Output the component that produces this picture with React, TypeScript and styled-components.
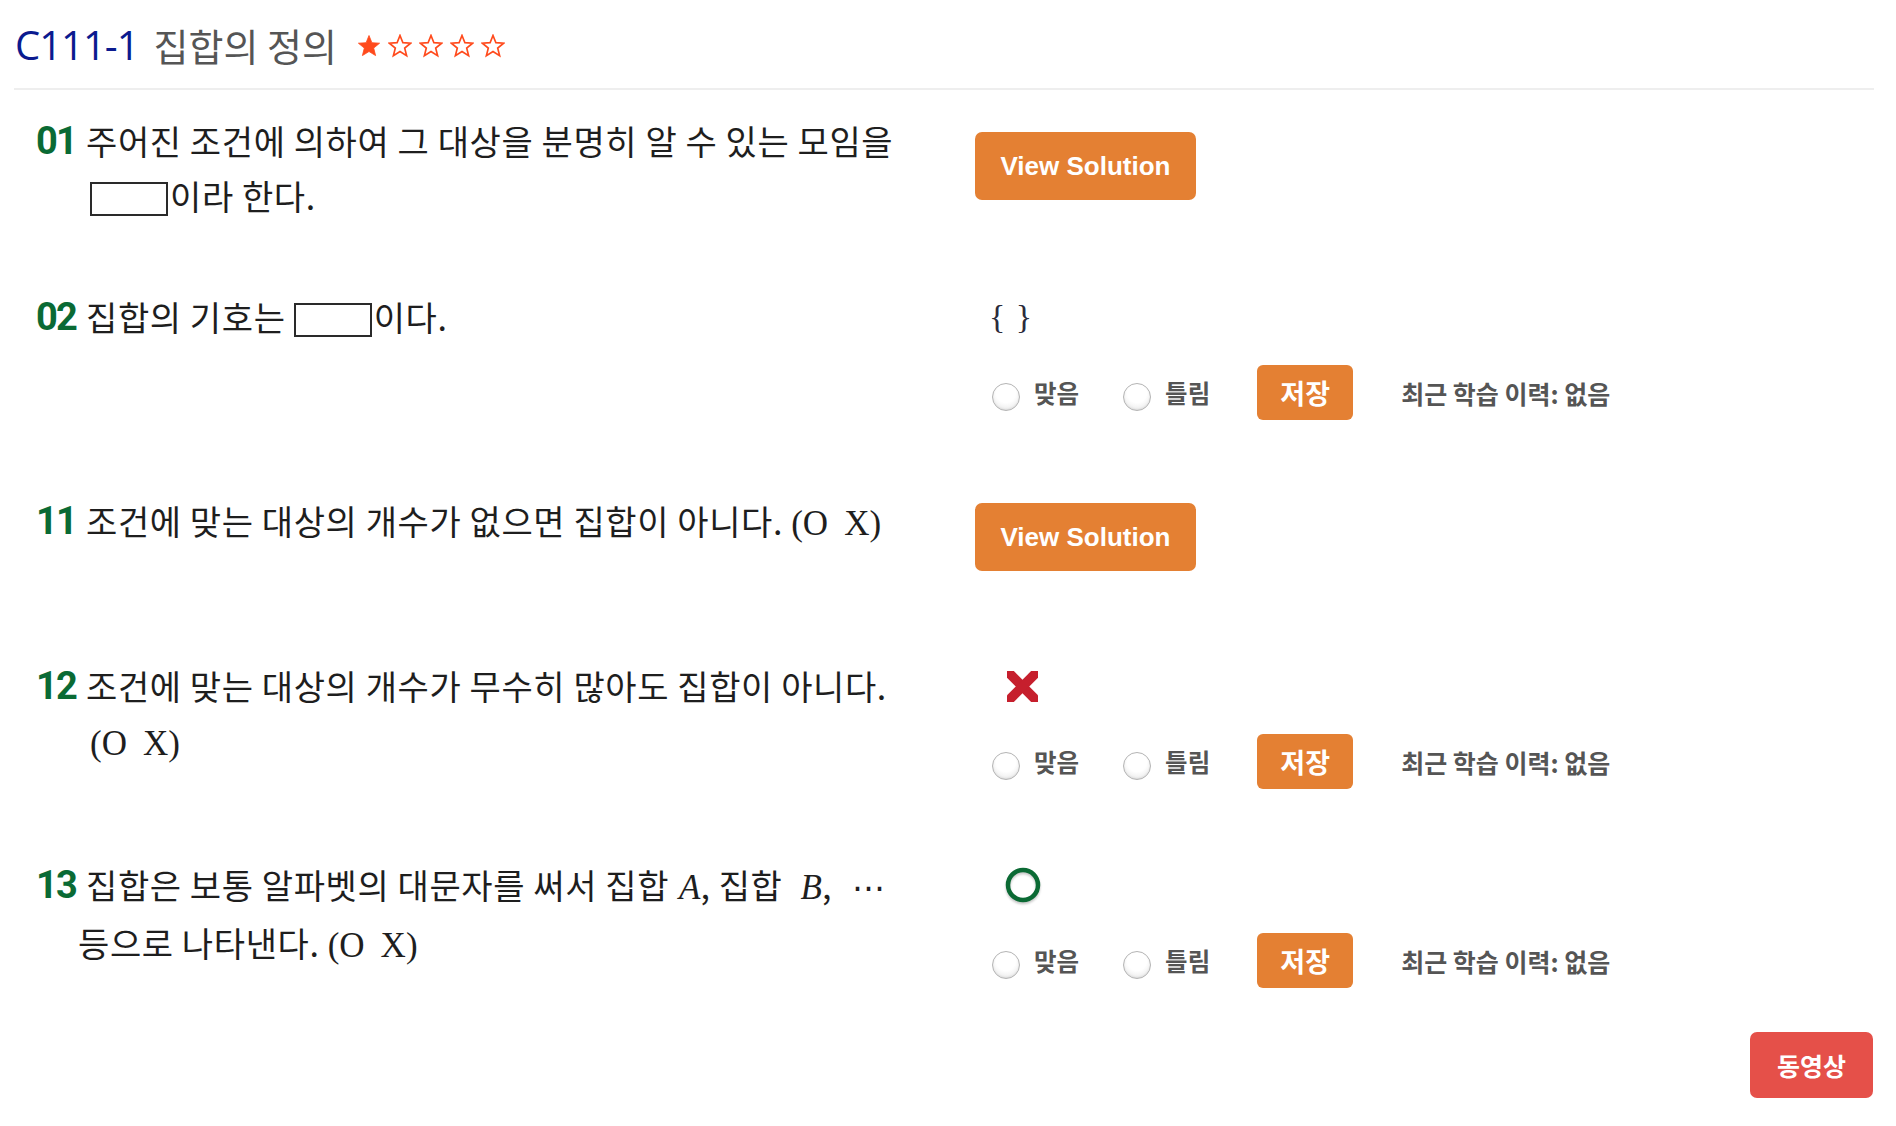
import React from "react";
import styled, { createGlobalStyle } from "styled-components";

const GlobalStyle = createGlobalStyle`
  html, body { margin: 0; padding: 0; background: #fff; }
  body { font-family: "Noto Sans CJK KR", "Noto Sans", sans-serif; color: #222; }
`;

const Page = styled.div`
  width: 1896px;
  min-height: 1126px;
  box-sizing: border-box;
`;

const Header = styled.header`
  display: flex;
  align-items: center;
  height: 88px;
  margin: 0 22px 0 14px;
  border-bottom: 2px solid #eeeeee;
`;

const Code = styled.span`
  font-family: "Open Sans", "Noto Sans", sans-serif;
  font-size: 40px;
  letter-spacing: -1px;
  color: #0b1a8f;
  margin-left: 1px;
`;

const TitleText = styled.span`
  font-family: "Noto Sans CJK KR", sans-serif;
  font-size: 38px;
  letter-spacing: 0;
  color: #555555;
  margin-left: 15px;
`;

const Stars = styled.span`
  display: inline-flex;
  gap: 7px;
  margin-left: 20px;
  margin-top: 4px;
`;

const List = styled.main`
  display: flex;
  flex-direction: column;
`;

const Row = styled.section<{ $top: number }>`
  display: grid;
  grid-template-columns: 975px 1fr;
  align-items: start;
  margin-top: ${(p) => p.$top}px;
`;

const Question = styled.div`
  display: flex;
  align-items: flex-start;
  padding-left: 36px;
  gap: 10px;
`;

const Num = styled.span`
  font-family: Roboto, "Liberation Sans", sans-serif;
  font-weight: 700;
  font-size: 38px;
  letter-spacing: -1.8px;
  line-height: 56px;
  color: #0a6a34;
  flex: none;
`;

const QText = styled.div`
  font-family: "Noto Sans CJK KR", sans-serif;
  font-size: 34px;
  letter-spacing: 0.6px;
  font-weight: 400;
  line-height: 55px;
  color: #1e1e1e;
  white-space: nowrap;
`;

const Line = styled.div<{ $shift?: number }>`
  margin-left: ${(p) => p.$shift ?? 0}px;
`;

const Blank = styled.span`
  display: inline-block;
  width: 74px;
  height: 30px;
  border: 2px solid #2a2a2a;
  vertical-align: -6px;
  margin-right: 2px;
`;

const Serif = styled.span`
  font-family: "Liberation Serif", serif;
  font-size: 35px;
  letter-spacing: 0;
`;

const Italic = styled(Serif)<{ $lead?: number }>`
  font-style: italic;
  margin-left: ${(p) => p.$lead ?? 10}px;
`;

const Dots = styled.span`
  font-family: "DejaVu Sans", sans-serif;
  font-size: 33px;
  margin-left: 20px;
`;

const Gap = styled.span`
  display: inline-block;
  width: 16px;
`;

const Right = styled.div<{ $pad: number }>`
  padding-top: ${(p) => p.$pad}px;
`;

const SolutionButton = styled.button`
  width: 221px;
  height: 68px;
  border: none;
  border-radius: 7px;
  background: #e48033;
  color: #fff;
  font-family: "Liberation Sans", Arial, sans-serif;
  font-weight: 700;
  font-size: 26px;
  cursor: pointer;
`;

const Graded = styled.div`
  padding-left: 14px;
`;

const Answer = styled.div<{ $indent?: number }>`
  height: 56px;
  display: flex;
  align-items: center;
  padding-left: ${(p) => p.$indent ?? 0}px;
`;

const Braces = styled.span`
  font-family: "Liberation Serif", serif;
  font-size: 34px;
  color: #2b2b3a;
  letter-spacing: 1px;
`;

const Controls = styled.div`
  display: flex;
  align-items: center;
  margin: 20px 0 0 3px;
  height: 55px;
`;

const Choice = styled.label`
  display: inline-flex;
  align-items: center;
  gap: 14px;
  margin-right: 44px;
  font-size: 24.5px;
  font-weight: 700;
  color: #555;
  cursor: pointer;
`;

const Radio = styled.input.attrs({ type: "radio" })`
  appearance: none;
  margin: 9px 0 0 0;
  width: 28px;
  height: 28px;
  border-radius: 50%;
  border: 1px solid #b4b4b4;
  background: radial-gradient(circle at 50% 35%, #ffffff 45%, #e2e2e2 100%);
  box-shadow: inset 0 -1px 2px rgba(0, 0, 0, 0.08);
`;

const SaveButton = styled.button`
  width: 96px;
  height: 55px;
  border: none;
  border-radius: 6px;
  background: #e48033;
  color: #fff;
  font-family: "Noto Sans CJK KR", sans-serif;
  font-weight: 700;
  font-size: 27px;
  margin-left: 3px;
  cursor: pointer;
`;

const History = styled.span`
  margin-left: 48px;
  font-size: 25px;
  font-weight: 700;
  color: #555;
`;

const Footer = styled.footer`
  display: flex;
  justify-content: flex-end;
  margin: 44px 23px 0 0;
`;

const VideoButton = styled.button`
  width: 123px;
  height: 66px;
  border: none;
  border-radius: 7px;
  background: #e55049;
  color: #fff;
  font-family: "Noto Sans CJK KR", sans-serif;
  font-weight: 700;
  font-size: 25px;
  cursor: pointer;
`;

const MarkSvg = styled.svg`
  display: block;
`;

const RingSvg = styled.svg`
  display: block;
  filter: drop-shadow(0 2px 1px rgba(0, 0, 0, 0.22));
`;

const Star: React.FC<{ filled?: boolean }> = ({ filled }) => (
  <svg width="24" height="24" viewBox="0 0 24 24">
    <path
      d="M12 1.5l2.9 7.2 7.7.5-5.9 4.9 1.9 7.5L12 17.5l-6.6 4.1 1.9-7.5-5.9-4.9 7.7-.5z"
      fill={filled ? "#ff4a1c" : "#fff"}
      stroke="#ff4a1c"
      strokeWidth={filled ? 0.8 : 1.7}
      strokeLinejoin="miter"
    />
  </svg>
);

const Cross = () => (
  <MarkSvg width="31" height="31" viewBox="0 0 30 30">
    <g fill="#c61f2d">
      <rect x="-10" y="10.3" width="50" height="9.4" transform="rotate(45 15 15)" />
      <rect x="-10" y="10.3" width="50" height="9.4" transform="rotate(-45 15 15)" />
    </g>
  </MarkSvg>
);

const Ring = () => (
  <RingSvg width="36" height="36" viewBox="0 0 36 36">
    <circle cx="18" cy="18" r="15" fill="none" stroke="#0b6a34" strokeWidth="4.5" />
  </RingSvg>
);

const Grading: React.FC<{ children: React.ReactNode; name: string; indent?: number }> = ({
  children,
  name,
  indent,
}) => (
  <Graded>
    <Answer $indent={indent}>{children}</Answer>
    <Controls>
      <Choice>
        <Radio name={name} />
        맞음
      </Choice>
      <Choice>
        <Radio name={name} />
        틀림
      </Choice>
      <SaveButton>저장</SaveButton>
      <History>최근 학습 이력: 없음</History>
    </Controls>
  </Graded>
);

const OX = () => (
  <Serif>
    (O<Gap />X)
  </Serif>
);

export default function App() {
  return (
    <Page>
      <GlobalStyle />
      <Header>
        <Code>C111-1</Code>
        <TitleText>집합의 정의</TitleText>
        <Stars>
          <Star filled />
          <Star />
          <Star />
          <Star />
          <Star />
        </Stars>
      </Header>
      <List>
        <Row $top={23}>
          <Question>
            <Num>01</Num>
            <QText>
              <Line>주어진 조건에 의하여 그 대상을 분명히 알 수 있는 모임을</Line>
              <Line $shift={4}>
                <Blank />
                이라 한다.
              </Line>
            </QText>
          </Question>
          <Right $pad={19}>
            <SolutionButton>View Solution</SolutionButton>
          </Right>
        </Row>

        <Row $top={66}>
          <Question>
            <Num>02</Num>
            <QText>
              <Line>
                집합의 기호는 <Blank />
                이다.
              </Line>
            </QText>
          </Question>
          <Grading name="q02">
            <Braces>{"{ }"}</Braces>
          </Grading>
        </Row>

        <Row $top={73}>
          <Question>
            <Num>11</Num>
            <QText>
              <Line>
                조건에 맞는 대상의 개수가 없으면 집합이 아니다. <OX />
              </Line>
            </QText>
          </Question>
          <Right $pad={10}>
            <SolutionButton>View Solution</SolutionButton>
          </Right>
        </Row>

        <Row $top={87}>
          <Question>
            <Num>12</Num>
            <QText>
              <Line>조건에 맞는 대상의 개수가 무수히 많아도 집합이 아니다.</Line>
              <Line $shift={4}>
                <OX />
              </Line>
            </QText>
          </Question>
          <Grading name="q12" indent={18}>
            <Cross />
          </Grading>
        </Row>

        <Row $top={68}>
          <Question>
            <Num>13</Num>
            <QText>
              <Line>
                집합은 보통 알파벳의 대문자를 써서 집합<Italic>A</Italic>, 집합<Italic $lead={18}>B</Italic>,
                <Dots>⋯</Dots>
              </Line>
              <Line $shift={-8}>
                등으로 나타낸다. <OX />
              </Line>
            </QText>
          </Question>
          <Grading name="q13" indent={16}>
            <Ring />
          </Grading>
        </Row>
      </List>
      <Footer>
        <VideoButton>동영상</VideoButton>
      </Footer>
    </Page>
  );
}
